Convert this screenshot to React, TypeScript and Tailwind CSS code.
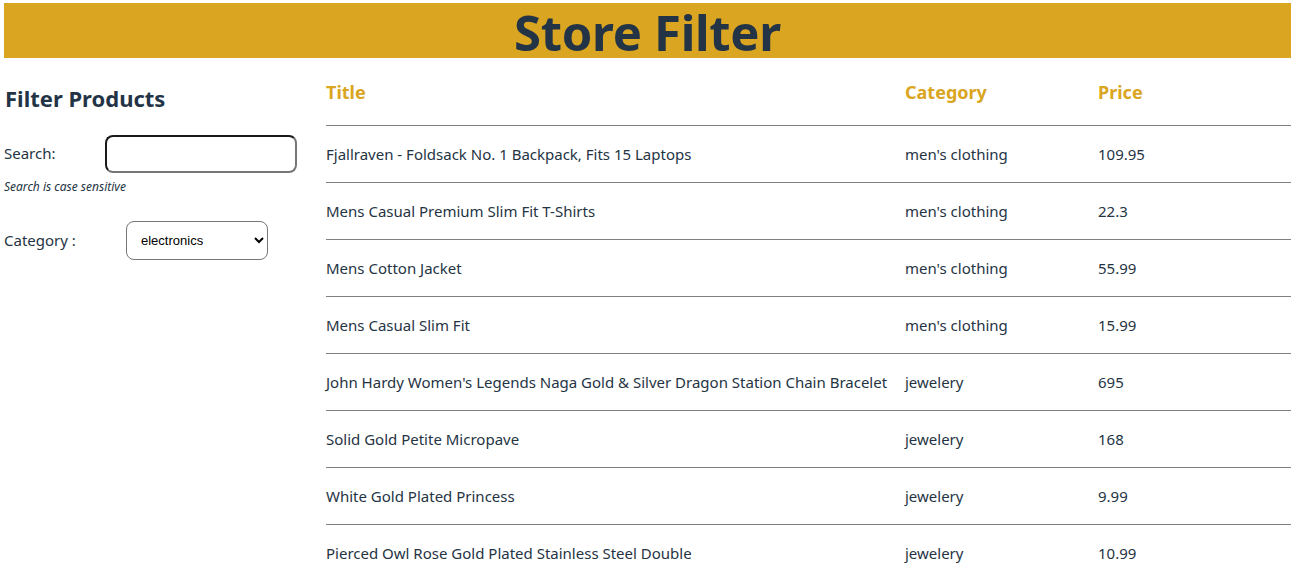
import React from "react";

const rows = [
  ["Fjallraven - Foldsack No. 1 Backpack, Fits 15 Laptops", "men's clothing", "109.95"],
  ["Mens Casual Premium Slim Fit T-Shirts", "men's clothing", "22.3"],
  ["Mens Cotton Jacket", "men's clothing", "55.99"],
  ["Mens Casual Slim Fit", "men's clothing", "15.99"],
  ["John Hardy Women's Legends Naga Gold & Silver Dragon Station Chain Bracelet", "jewelery", "695"],
  ["Solid Gold Petite Micropave", "jewelery", "168"],
  ["White Gold Plated Princess", "jewelery", "9.99"],
  ["Pierced Owl Rose Gold Plated Stainless Steel Double", "jewelery", "10.99"],
];

export default function App() {
  return (
    <div
      className="h-[578px] overflow-hidden bg-white pt-[3px] pl-[4px] text-[#253444]"
      style={{ fontFamily: '"Noto Sans", "Open Sans", sans-serif' }}
    >
      <header className="w-[1287px] h-[55px] bg-[#DAA520] flex items-center justify-center">
        <h1 className="text-[49px] font-bold leading-[55px] text-[#243447] tracking-[-0.3px] pt-[3px]">Store Filter</h1>
      </header>
      <div className="flex w-[1287px]">
        <aside className="w-[322px] shrink-0 pt-[26px]">
          <h2 className="text-[22px] font-bold leading-[30px] text-[#243447] pl-[1px] -mt-[1px] mb-[1px]">Filter Products</h2>
          <div className="flex items-center mt-[22px]">
            <label className="w-[101px] text-[15px] leading-[20px] -mt-[2px]">Search:</label>
            <input
              type="text"
              className="w-[192px] h-[38px] rounded-[8px] border-2 border-t-[#1a1a1a] border-l-[#1a1a1a] border-r-[#767676] border-b-[#767676] outline-none"
            />
          </div>
          <p className="text-[12px] italic leading-[16px] mt-[6px]">Search is case sensitive</p>
          <div className="flex items-center mt-[26px]">
            <label className="w-[122px] text-[15px] leading-[20px] -mt-[2px]">Category :</label>
            <select
              defaultValue="electronics"
              className="w-[142px] h-[39px] rounded-[8px] border border-[#767676] bg-white pl-[10px] text-[13px] text-black"
              style={{ fontFamily: '"Liberation Sans", Arial, sans-serif' }}
            >
              <option value="all">all</option>
              <option value="electronics">electronics</option>
              <option value="jewelery">jewelery</option>
              <option value="men's clothing">men's clothing</option>
              <option value="women's clothing">women's clothing</option>
            </select>
          </div>
        </aside>
        <div className="flex-1">
          <div className="flex h-[68px] items-center pt-[2px] border-b border-[#808080] text-[#DAA520] font-bold text-[18px]">
            <div className="w-[579px] shrink-0">Title</div>
            <div className="w-[193px] shrink-0">Category</div>
            <div className="flex-1">Price</div>
          </div>
          {rows.map((r, i) => (
            <div key={i} className="flex h-[57px] items-center border-b border-[#808080] text-[15px] whitespace-nowrap">
              <div className="w-[579px] shrink-0">{r[0]}</div>
              <div className="w-[193px] shrink-0">{r[1]}</div>
              <div className="flex-1">{r[2]}</div>
            </div>
          ))}
        </div>
      </div>
    </div>
  );
}
